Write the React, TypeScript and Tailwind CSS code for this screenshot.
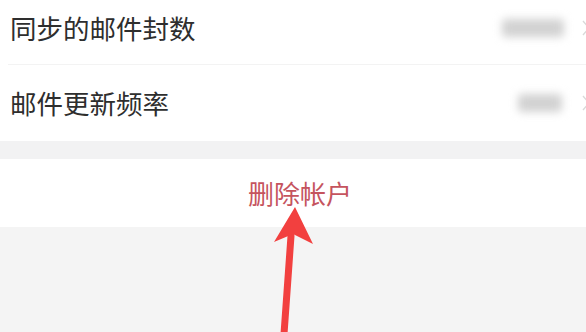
import React from 'react'

const rows = [
  { label: '同步的邮件封数', blob: 'w-[62px] mr-[18px]', h: 'h-[64px] pb-[8px]' },
  { label: '邮件更新频率', blob: 'w-[44px] mr-[20px]', h: 'h-[76px]' },
]

function Chevron() {
  return (
    <svg width="8" height="16" viewBox="0 0 8 16" className="text-[#d9d9d9]">
      <path d="M1 1 L7 8 L1 15" fill="none" stroke="currentColor" strokeWidth="1.4" />
    </svg>
  )
}

export default function App() {
  return (
    <div
      className="relative w-[586px] h-[332px] overflow-hidden bg-[#f4f4f4]"
      style={{ fontFamily: '"Noto Sans CJK SC", "Noto Sans", sans-serif' }}
    >
      {/* settings list */}
      <div className="bg-white">
        {rows.map((r, i) => (
          <div key={r.label}>
            {i > 0 && <div className="ml-[8px] h-px bg-[#f3f3f3]" />}
            <div className={`flex items-center justify-between pl-[10px] pr-0 ${r.h}`}>
              <span className="text-[26.5px] leading-none text-[#2e2e2e]">{r.label}</span>
              <div className="mr-[-4px] flex items-center">
                <div className={`h-[18px] rounded bg-[#d2d2d2] blur-[4px] ${r.blob}`} />
                <Chevron />
              </div>
            </div>
          </div>
        ))}
      </div>

      <div className="h-[18px] bg-[#f2f2f3]" />

      {/* delete account */}
      <div className="flex h-[68px] items-center justify-center bg-white pl-[14px]">
        <span className="text-[26px] leading-none text-[#c5545e]">删除帐户</span>
      </div>

      {/* annotation arrow */}
      <svg className="absolute left-0 top-0" width="586" height="332" viewBox="0 0 586 332">
        <path d="M291 236 L284 334" stroke="#f2403f" strokeWidth="7" strokeLinecap="round" fill="none" />
        <path d="M295 207 L313 244 L293 234 L274 242 Z" fill="#f2403f" />
      </svg>
    </div>
  )
}
